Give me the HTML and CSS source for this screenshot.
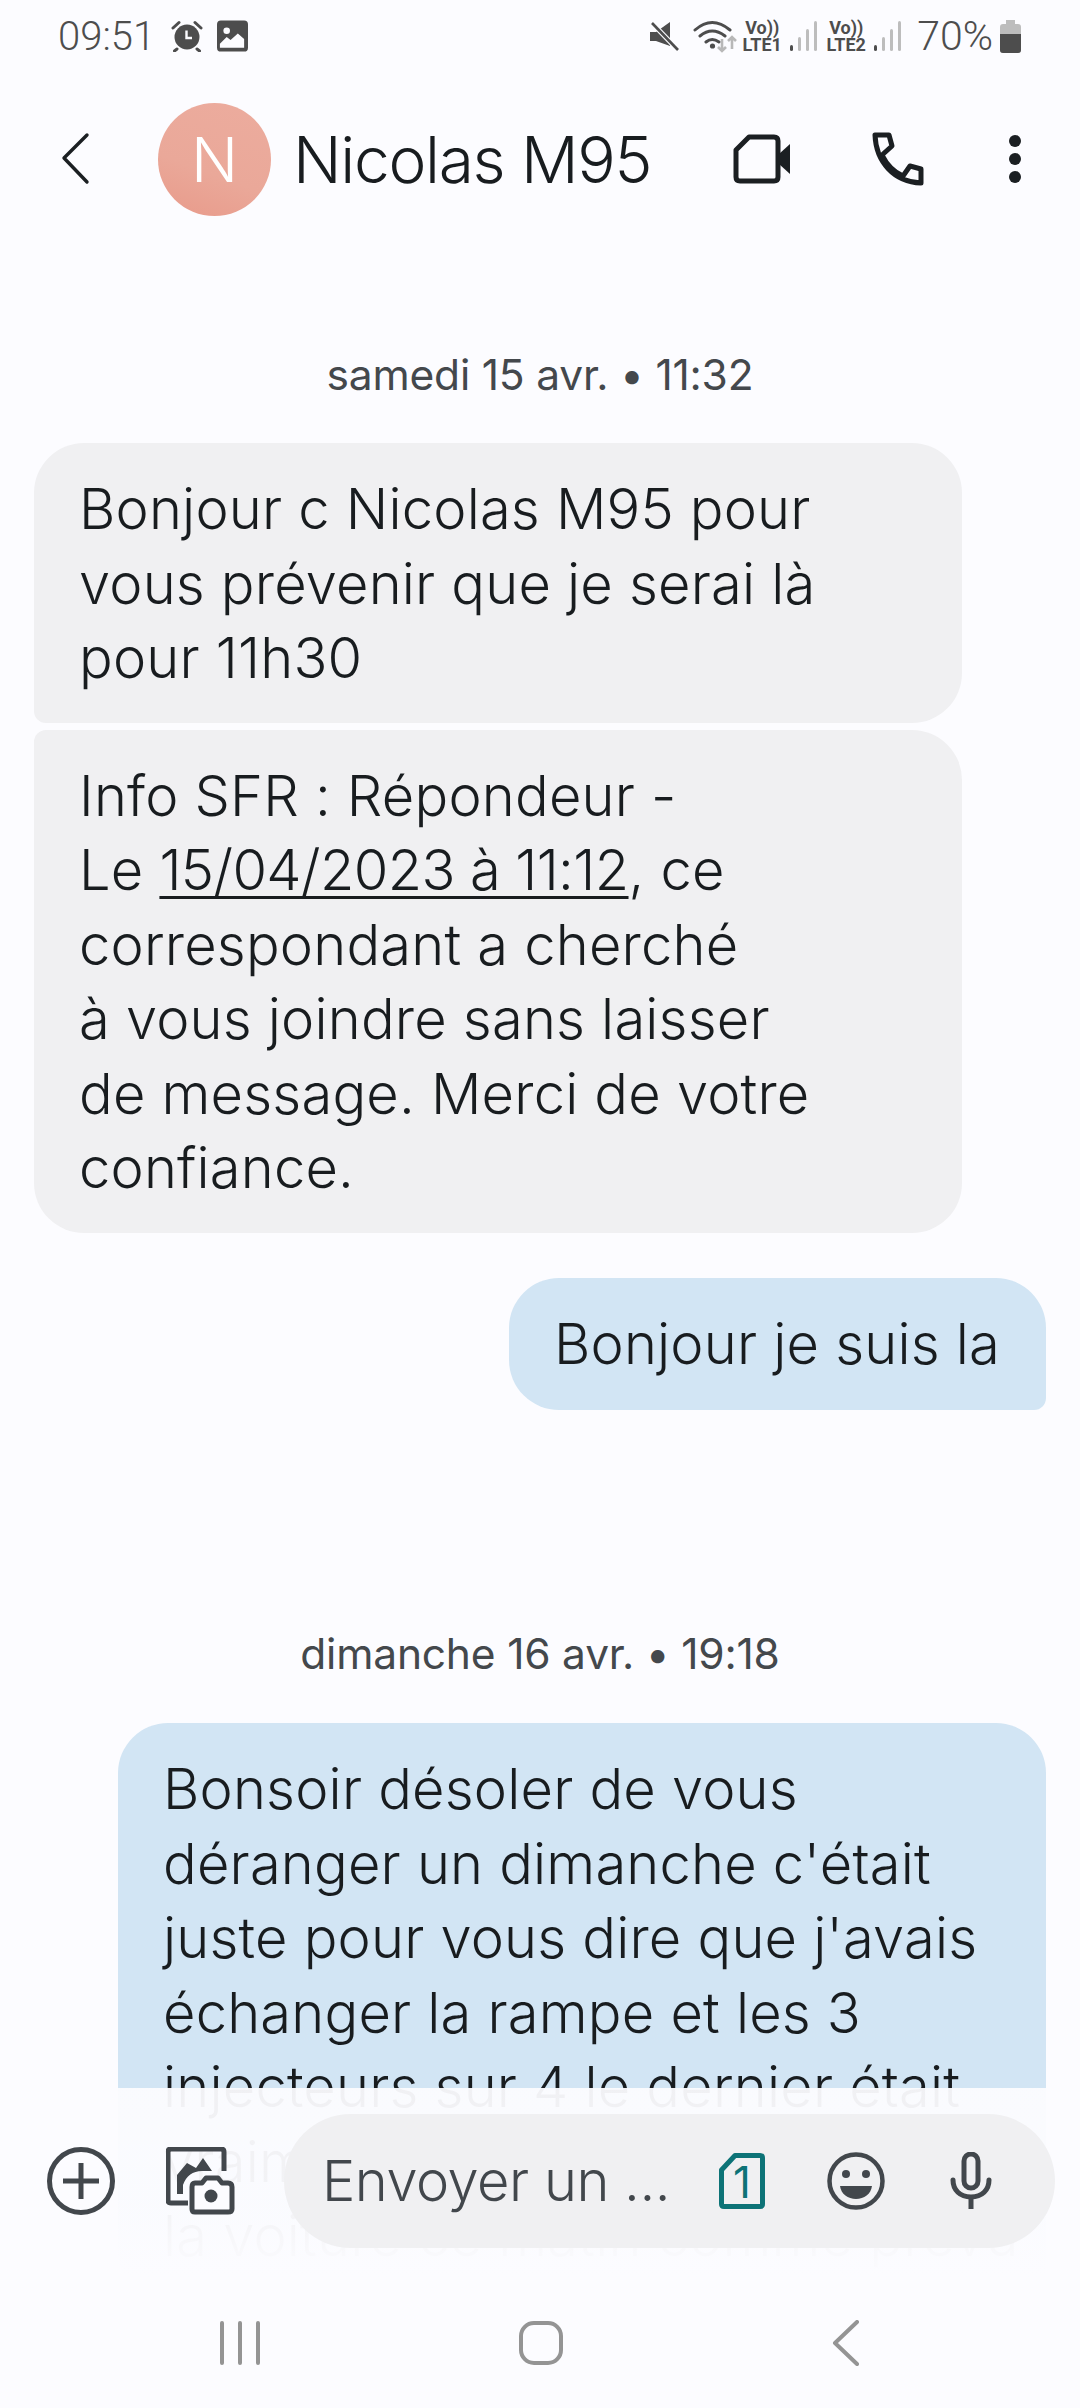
FILE: index.html
```html
<!DOCTYPE html>
<html lang="fr">
<head>
<meta charset="utf-8"/>
<meta content="width=device-width, initial-scale=1.0" name="viewport"/>
<title>Nicolas M95</title>
<link rel="stylesheet" href="styles.css">
</head>
<body>
<div class="screen">

  <div class="status-bar">
    <span class="status-time">09:51</span>
    <svg class="ic-alarm" viewBox="0 0 32 32">
      <circle cx="16" cy="17" r="12.500" fill="#4d4d4d"/>
      <path d="M2 8 L8 2.500 M30 8 L24 2.500 M6 29 L3.500 31 M26 29 L28.500 31" stroke="#4d4d4d" stroke-width="3" stroke-linecap="round"/>
      <path d="M15.500 10.500 V18 H21" stroke="#fcfcff" stroke-width="2.400" fill="none"/>
    </svg>
    <svg class="ic-picture" viewBox="0 0 32 32">
      <rect width="32" height="32" rx="4" fill="#4d4d4d"/>
      <circle cx="10" cy="10.500" r="3.400" fill="#fcfcff"/>
      <path d="M3 24 L10 17 L14 20 L21.500 13.500 L28 19 V28 H3 Z" fill="#fcfcff"/>
    </svg>
    <div class="status-right">
      <svg class="ic-mute" viewBox="0 0 30 30">
        <path d="M1 11 H7 L21 1 V25 L7 20 H1 Z" fill="#4d4d4d"/>
        <path d="M3 2 L29 29" stroke="#fcfcff" stroke-width="5"/>
        <path d="M3 2 L29 29" stroke="#4d4d4d" stroke-width="2.600"/>
      </svg>
      <svg class="ic-wifi" viewBox="0 0 46 34">
        <path d="M2 11 Q19 -4 37 11 M7 17 Q19 7 32 17 M13 23 Q19 18 26 23" stroke="#4d4d4d" stroke-width="3" fill="none" stroke-linecap="round"/>
        <circle cx="19.500" cy="27" r="2.600" fill="#4d4d4d"/>
        <path d="M29 20 V32 M25 28 L29 32 L33 28" stroke="#b8b8b8" stroke-width="2.600" fill="none"/>
        <path d="M39 30 V18 M35 22 L39 18 L43 22" stroke="#b8b8b8" stroke-width="2.600" fill="none"/>
      </svg>
      <span class="sim-tag"><span>Vo))</span><span>LTE1</span></span>
      <svg class="ic-signal" viewBox="0 0 28 32">
        <rect x="0" y="25" width="3" height="6" rx="1.500" fill="#4d4d4d"/>
        <rect x="8" y="17" width="3" height="14" rx="1.500" fill="#bdbdbd"/>
        <rect x="16" y="9" width="3" height="22" rx="1.500" fill="#bdbdbd"/>
        <rect x="24" y="1" width="3" height="30" rx="1.500" fill="#bdbdbd"/>
      </svg>
      <span class="sim-tag"><span>Vo))</span><span>LTE2</span></span>
      <svg class="ic-signal" viewBox="0 0 28 32">
        <rect x="0" y="25" width="3" height="6" rx="1.500" fill="#4d4d4d"/>
        <rect x="8" y="17" width="3" height="14" rx="1.500" fill="#bdbdbd"/>
        <rect x="16" y="9" width="3" height="22" rx="1.500" fill="#bdbdbd"/>
        <rect x="24" y="1" width="3" height="30" rx="1.500" fill="#bdbdbd"/>
      </svg>
      <span class="status-battery-text">70%</span>
      <svg class="ic-battery" viewBox="0 0 21 33">
        <path d="M6 0 H15 V4 H18 Q21 4 21 7 V30 Q21 33 18 33 H3 Q0 33 0 30 V7 Q0 4 3 4 H6 Z" fill="#bdbdbd"/>
        <path d="M0 14 H21 V30 Q21 33 18 33 H3 Q0 33 0 30 Z" fill="#4d4d4d"/>
      </svg>
    </div>
  </div>

  <div class="top-bar">
    <svg class="ic-back" viewBox="0 0 32 54">
      <path d="M27 3 L4 26 L27 50" stroke="#1b1f22" stroke-width="3.400" fill="none" stroke-linecap="round" stroke-linejoin="round"/>
    </svg>
    <div class="avatar">N</div>
    <div class="contact-name">Nicolas M95</div>
    <svg class="ic-video" viewBox="0 0 58 50">
      <path d="M16 3 H41 Q45 3 45 7 V43 Q45 47 41 47 H7 Q3 47 3 43 V16 Z" stroke="#1b1f22" stroke-width="5" fill="none" stroke-linejoin="round"/>
      <path d="M46 20 L57 10 V40 L46 30 Z" fill="#1b1f22"/>
    </svg>
    <svg class="ic-phone" viewBox="0 0 52 54">
      <path d="M3 3 H17 L20 14 L10 23 C15 33 22 40 31 44 L38 34 L49 37 V51 C22 50 4 30 3 3 Z" stroke="#1b1f22" stroke-width="5" fill="none" stroke-linejoin="round"/>
    </svg>
    <div class="dots"><i></i><i></i><i></i></div>
  </div>

  <div class="thread">
    <div class="date-line first">samedi 15 avr. • 11:32</div>
    <div class="bubble in in-top">Bonjour c Nicolas M95 pour<br>vous prévenir que je serai là<br>pour 11h30</div>
    <div class="bubble in in-bottom">Info SFR : Répondeur -<br>Le <u>15/04/2023 à 11:12</u>, ce<br>correspondant a cherché<br>à vous joindre sans laisser<br>de message. Merci de votre<br>confiance.</div>
    <div class="bubble out short">Bonjour je suis la</div>
    <div class="date-line second">dimanche 16 avr. • 19:18</div>
    <div class="bubble out long">Bonsoir désoler de vous<br>déranger un dimanche c'était<br>juste pour vous dire que j'avais<br>échanger la rampe et les 3<br>injecteurs sur 4 le dernier était<br>vraiment mort et j'ai récupéré<br>la voiture ce matin comme prévu</div>
  </div>

  <div class="composer">
    <div class="composer-row">
      <svg class="ic-plus" viewBox="0 0 68 68">
        <circle cx="34" cy="34" r="31.500" stroke="#42474c" stroke-width="5" fill="none"/>
        <path d="M16 34 H52 M34 16 V52" stroke="#42474c" stroke-width="5"/>
      </svg>
      <svg class="ic-gallery" viewBox="0 0 69 68">
        <path d="M22 56 H5 Q2 56 2 53 V5 Q2 2 5 2 H55 Q58 2 58 5 V24" stroke="#42474c" stroke-width="5" fill="none"/>
        <path d="M11 47 V28 L21 16 L30 21 L37 11 L46 24 H36 Q22 24 17 38 V47 Z" fill="#42474c"/>
        <path d="M29 36 H36 L40 31 H52 L56 36 H62 Q66 36 66 40 V62 Q66 65 62 65 H29 Q26 65 26 62 V40 Q26 36 29 36 Z" stroke="#42474c" stroke-width="5" fill="#fcfcff" stroke-linejoin="round"/>
        <circle cx="45" cy="49" r="6.500" fill="#42474c"/>
      </svg>
      <div class="input-pill">
        <span class="input-placeholder">Envoyer un ...</span>
        <div class="sim-badge">
          <svg viewBox="0 0 46 56"><path d="M16 2.500 H41 Q43.500 2.500 43.500 5 V51 Q43.500 53.500 41 53.500 H5 Q2.500 53.500 2.500 51 V17 Z" stroke="#0d7377" stroke-width="5" fill="none" stroke-linejoin="round"/></svg>
          <span>1</span>
        </div>
        <svg class="ic-emoji" viewBox="0 0 58 58">
          <circle cx="29" cy="29" r="26.500" stroke="#42474c" stroke-width="4.500" fill="none"/>
          <circle cx="19" cy="22" r="4" fill="#42474c"/>
          <circle cx="39" cy="22" r="4" fill="#42474c"/>
          <path d="M13 34 H45 C44 42 37 47 29 47 C21 47 14 42 13 34 Z" fill="#42474c"/>
        </svg>
        <svg class="ic-mic" viewBox="0 0 42 58">
          <rect x="14" y="2" width="14" height="34" rx="7" stroke="#42474c" stroke-width="5" fill="none"/>
          <path d="M3 28 C3 38 10 45 21 45 C32 45 39 38 39 28" stroke="#42474c" stroke-width="5" fill="none" stroke-linecap="round"/>
          <path d="M21 44 V57" stroke="#42474c" stroke-width="5"/>
        </svg>
      </div>
    </div>
    <div class="nav-bar">
      <svg class="nav-recent" viewBox="0 0 42 44">
        <path d="M3 2 V42 M21 2 V42 M39 2 V42" stroke="#949494" stroke-width="4" stroke-linecap="round"/>
      </svg>
      <svg class="nav-home" viewBox="0 0 44 44">
        <rect x="2" y="2" width="40" height="40" rx="13" stroke="#949494" stroke-width="4" fill="none"/>
      </svg>
      <svg class="nav-back" viewBox="0 0 28 46">
        <path d="M25 2 L3 23 L25 44" stroke="#949494" stroke-width="4" fill="none" stroke-linecap="round" stroke-linejoin="round"/>
      </svg>
    </div>
  </div>

</div>
</body>
</html>
```

FILE: styles.css
```css
html, body {
    margin: 0;
    padding: 0;
}

body {
    font-family: 'Inter', 'Roboto', sans-serif;
    background-color: #fcfcff;
    color: #181c1f;
}

svg {
    display: block;
    flex: none;
}

.screen {
    position: relative;
    width: 1080px;
    height: 2408px;
    overflow: hidden;
    background-color: #fcfcff;
}

/* status bar */
.status-bar {
    display: flex;
    align-items: center;
    height: 72px;
    padding: 0 59px 0 58px;
    box-sizing: border-box;
    color: #4d4d4d;
}

.status-time {
    font-family: 'Roboto', sans-serif;
    font-size: 40px;
    font-weight: 300;
    width: 113px;
}

.ic-alarm {
    width: 32px;
    height: 32px;
    margin-right: 14px;
}

.ic-picture {
    width: 31px;
    height: 32px;
}

.status-right {
    display: flex;
    align-items: center;
    margin-left: auto;
}

.ic-mute {
    width: 30px;
    height: 30px;
    margin-right: 14px;
}

.ic-wifi {
    width: 46px;
    height: 34px;
    margin-right: 3px;
}

.sim-tag {
    display: flex;
    flex-direction: column;
    align-items: center;
    width: 40px;
    font-family: 'Roboto', sans-serif;
    font-size: 18px;
    line-height: 17px;
    font-weight: 700;
}

.ic-signal {
    width: 28px;
    height: 32px;
    margin: 0 8px;
}

.status-battery-text {
    font-family: 'Roboto', sans-serif;
    font-size: 41px;
    font-weight: 300;
    margin: 0 7px 0 7px;
}

.ic-battery {
    width: 21px;
    height: 33px;
}

/* contact header */
.top-bar {
    display: flex;
    align-items: center;
    height: 174px;
    padding: 0 0 0 60px;
    box-sizing: border-box;
}

.ic-back {
    width: 32px;
    height: 54px;
    margin-right: 66px;
}

.avatar {
    display: flex;
    align-items: center;
    justify-content: center;
    width: 113px;
    height: 113px;
    border-radius: 50%;
    background: linear-gradient(200deg, #ecac9e 0, #eaa899 60%, #e89a8a 100%);
    color: #ffffff;
    font-size: 62px;
    font-weight: 300;
    margin-right: 22px;
}

.contact-name {
    font-size: 64px;
    font-weight: 360;
    letter-spacing: -1.3px;
    width: 440px;
    white-space: nowrap;
}

.ic-video {
    width: 58px;
    height: 50px;
    margin-right: 81px;
}

.ic-phone {
    width: 52px;
    height: 54px;
    margin-right: 85px;
}

.dots {
    display: flex;
    flex-direction: column;
    gap: 6px;
}

.dots i {
    display: block;
    width: 12px;
    height: 12px;
    border-radius: 50%;
    background-color: #1b1f22;
}

/* messages */
.thread {
    display: flex;
    flex-direction: column;
    padding: 0 34px;
}

.date-line {
    align-self: center;
    height: 50px;
    line-height: 50px;
    font-size: 42.5px;
    letter-spacing: -0.2px;
    color: #44484c;
}

.date-line.first {
    margin-top: 104px;
}

.date-line.second {
    margin-top: 219px;
}

.bubble {
    font-size: 56px;
    font-weight: 360;
    line-height: 74.5px;
    letter-spacing: 0.2px;
    padding: 29px 46px 27px 45px;
    white-space: nowrap;
}

.bubble u {
    letter-spacing: -0.6px;
    text-decoration-thickness: 3px;
    text-underline-offset: 6px;
}

.in {
    align-self: flex-start;
    width: 928px;
    box-sizing: border-box;
    background-color: #f0f0f2;
}

.in-top {
    margin-top: 43px;
    border-radius: 50px 50px 50px 12px;
}

.in-bottom {
    margin-top: 7px;
    border-radius: 12px 50px 50px 50px;
}

.out {
    align-self: flex-end;
    background-color: #d2e5f4;
}

.short {
    margin-top: 45px;
    padding-top: 29px;
    padding-bottom: 29px;
    border-radius: 50px 50px 12px 50px;
}

.long {
    margin-top: 44px;
    width: 928px;
    box-sizing: border-box;
    border-radius: 50px 50px 12px 50px;
}

/* bottom overlay, message text shows faintly through it */
.composer {
    position: absolute;
    left: 0;
    right: 0;
    top: 2088px;
    bottom: 0;
    display: flex;
    flex-direction: column;
    background: linear-gradient(rgba(252, 252, 255, 0.95) 0, rgba(252, 252, 255, 0.96) 120px, #fcfcff 190px);
}

.composer-row {
    display: flex;
    align-items: center;
    height: 134px;
    margin-top: 26px;
    padding: 0 25px 0 47px;
}

.ic-plus {
    width: 68px;
    height: 68px;
    margin-right: 51px;
}

.ic-gallery {
    width: 69px;
    height: 68px;
    margin-right: 49px;
}

.input-pill {
    flex: 1;
    display: flex;
    align-items: center;
    height: 134px;
    border-radius: 67px;
    background-color: #f0f0f2;
    padding-left: 38px;
}

.input-placeholder {
    font-size: 56px;
    font-weight: 360;
    letter-spacing: -0.5px;
    color: #42474c;
    width: 397px;
    white-space: nowrap;
}

.sim-badge {
    position: relative;
    width: 46px;
    height: 56px;
    margin-right: 62px;
}

.sim-badge span {
    position: absolute;
    left: 0;
    right: 0;
    top: 4px;
    text-align: center;
    font-size: 44px;
    line-height: 50px;
    font-weight: 400;
    color: #0d7377;
}

.ic-emoji {
    width: 58px;
    height: 58px;
    margin-right: 65px;
}

.ic-mic {
    width: 42px;
    height: 58px;
}

.nav-bar {
    display: flex;
    align-items: center;
    height: 44px;
    margin-top: 73px;
}

.nav-recent {
    width: 42px;
    height: 44px;
    margin-left: 219px;
}

.nav-home {
    width: 44px;
    height: 44px;
    margin-left: 258px;
}

.nav-back {
    width: 28px;
    height: 46px;
    margin-left: 269px;
}
```
